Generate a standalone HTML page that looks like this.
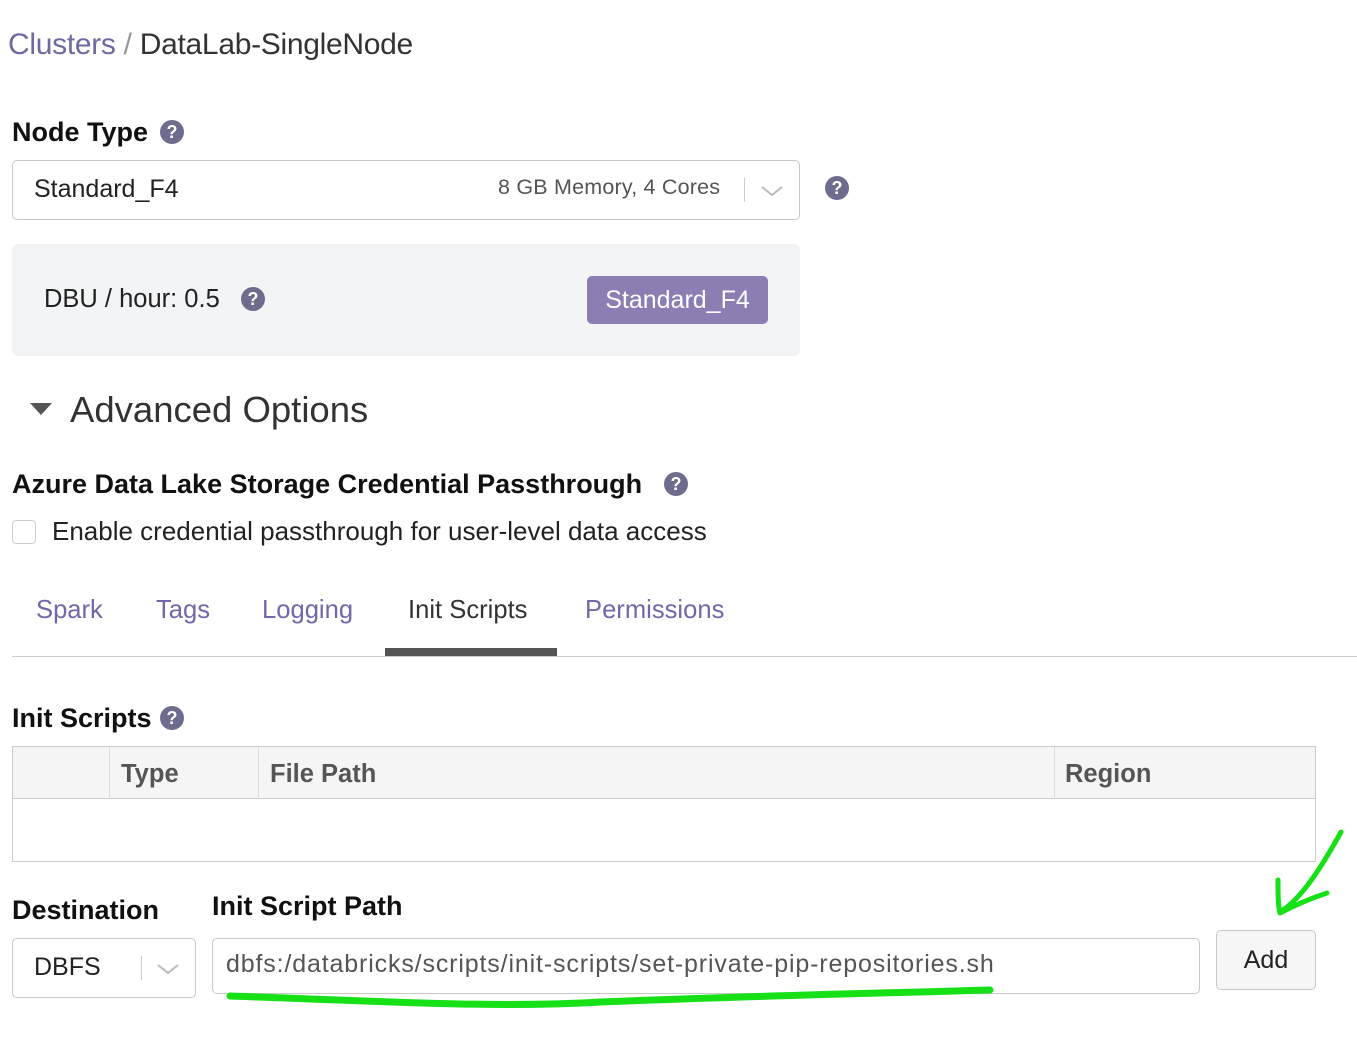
<!DOCTYPE html>
<html><head><meta charset="utf-8"><style>
*{box-sizing:border-box;margin:0;padding:0}
body{width:1357px;height:1038px;background:#fff;font-family:"Liberation Sans",Arial,sans-serif;color:#222;position:relative;overflow:hidden}
.a{position:absolute;white-space:nowrap}
.h{font-weight:bold;font-size:27px;color:#111}
.q{position:absolute;width:24px;height:24px;border-radius:50%;background:#6e6c8e;color:#fff;font-weight:bold;font-size:18px;text-align:center;line-height:24px}
.tab{position:absolute;top:596px;font-size:25.6px;color:#7466a8}
</style></head><body>
<div class="a" style="left:8px;top:28px;font-size:30px;color:#6f6a9e;letter-spacing:-0.3px">Clusters <span style="color:#999">/</span> <span style="color:#333">DataLab-SingleNode</span></div>

<div class="a h" style="left:12px;top:117px">Node Type</div>
<div class="q" style="left:160px;top:120px">?</div>
<div class="a" style="left:12px;top:160px;width:788px;height:60px;border:1px solid #c8c8c8;border-radius:5px"></div>
<div class="a" style="left:34px;top:175px;font-size:25px;color:#222">Standard_F4</div>
<div class="a" style="left:498px;top:175px;font-size:21.5px;color:#555;letter-spacing:0.2px">8 GB Memory, 4 Cores</div>
<div class="a" style="left:744px;top:178px;width:1px;height:24px;background:#ccc"></div>
<svg class="a" style="left:760px;top:184px" width="24" height="14"><path d="M2 3 L12 11 L22 3" fill="none" stroke="#bbb" stroke-width="2"/></svg>
<div class="q" style="left:825px;top:176px">?</div>

<div class="a" style="left:12px;top:244px;width:788px;height:112px;background:#f3f4f6;border-radius:6px"></div>
<div class="a" style="left:44px;top:285px;font-size:25.5px;color:#222">DBU / hour: 0.5</div>
<div class="q" style="left:241px;top:287px">?</div>
<div class="a" style="left:587px;top:276px;width:181px;height:48px;background:#8c7db3;border-radius:5px;color:#fff;font-size:25px;text-align:center;line-height:48px">Standard_F4</div>

<svg class="a" style="left:30px;top:403px" width="22" height="14"><path d="M0 0 L22 0 L11 12 Z" fill="#555"/></svg>
<div class="a" style="left:70px;top:389px;font-size:36.5px;color:#333">Advanced Options</div>

<div class="a h" style="left:12px;top:469px">Azure Data Lake Storage Credential Passthrough</div>
<div class="q" style="left:664px;top:472px">?</div>
<div class="a" style="left:12px;top:520px;width:24px;height:24px;border:1px solid #ccc;border-radius:4px"></div>
<div class="a" style="left:52px;top:516px;font-size:26px;color:#222">Enable credential passthrough for user-level data access</div>

<div class="tab" style="left:36px">Spark</div>
<div class="tab" style="left:156px">Tags</div>
<div class="tab" style="left:262px">Logging</div>
<div class="tab" style="left:408px;color:#333">Init Scripts</div>
<div class="tab" style="left:585px">Permissions</div>
<div class="a" style="left:12px;top:656px;width:1345px;height:1px;background:#ccc"></div>
<div class="a" style="left:385px;top:648px;width:172px;height:8px;background:#555"></div>

<div class="a h" style="left:12px;top:703px">Init Scripts</div>
<div class="q" style="left:160px;top:706px">?</div>
<div class="a" style="left:12px;top:746px;width:1304px;height:116px;border:1px solid #ccc"></div>
<div class="a" style="left:13px;top:747px;width:1302px;height:52px;background:#f5f5f5;border-bottom:1px solid #ccc"></div>
<div class="a" style="left:109px;top:747px;width:1px;height:52px;background:#ddd"></div>
<div class="a" style="left:258px;top:747px;width:1px;height:52px;background:#ddd"></div>
<div class="a" style="left:1054px;top:747px;width:1px;height:52px;background:#ddd"></div>
<div class="a" style="left:121px;top:760px;font-size:25.5px;font-weight:bold;color:#555">Type</div>
<div class="a" style="left:270px;top:760px;font-size:25.5px;font-weight:bold;color:#555">File Path</div>
<div class="a" style="left:1065px;top:760px;font-size:25.5px;font-weight:bold;color:#555">Region</div>

<div class="a h" style="left:12px;top:895px">Destination</div>
<div class="a h" style="left:212px;top:891px">Init Script Path</div>
<div class="a" style="left:12px;top:938px;width:184px;height:60px;border:1px solid #c8c8c8;border-radius:5px"></div>
<div class="a" style="left:34px;top:953px;font-size:25px;color:#222">DBFS</div>
<div class="a" style="left:141px;top:956px;width:1px;height:24px;background:#ccc"></div>
<svg class="a" style="left:156px;top:962px" width="24" height="14"><path d="M2 3 L12 11 L22 3" fill="none" stroke="#bbb" stroke-width="2"/></svg>
<div class="a" style="left:212px;top:938px;width:988px;height:56px;border:1px solid #c8c8c8;border-radius:5px"></div>
<div class="a" style="left:226px;top:950px;font-size:25px;color:#555;letter-spacing:0.85px">dbfs:/databricks/scripts/init-scripts/set-private-pip-repositories.sh</div>
<div class="a" style="left:1216px;top:930px;width:100px;height:60px;border:1px solid #c8c8c8;border-radius:5px;background:#f6f6f6;font-size:25px;text-align:center;line-height:58px;color:#222">Add</div>

<svg class="a" style="left:0;top:0" width="1357" height="1038">
<path d="M230 996 C400 1002 500 1008 600 1002 C750 996 850 994 990 990" fill="none" stroke="#16e016" stroke-width="7" stroke-linecap="round"/>
<path d="M1341 832 C1320 870 1300 900 1280 912 M1278 880 C1278 895 1278 905 1280 913 C1295 905 1312 898 1327 893" fill="none" stroke="#16e016" stroke-width="5" stroke-linecap="round" stroke-linejoin="round"/>
</svg>
</body></html>
